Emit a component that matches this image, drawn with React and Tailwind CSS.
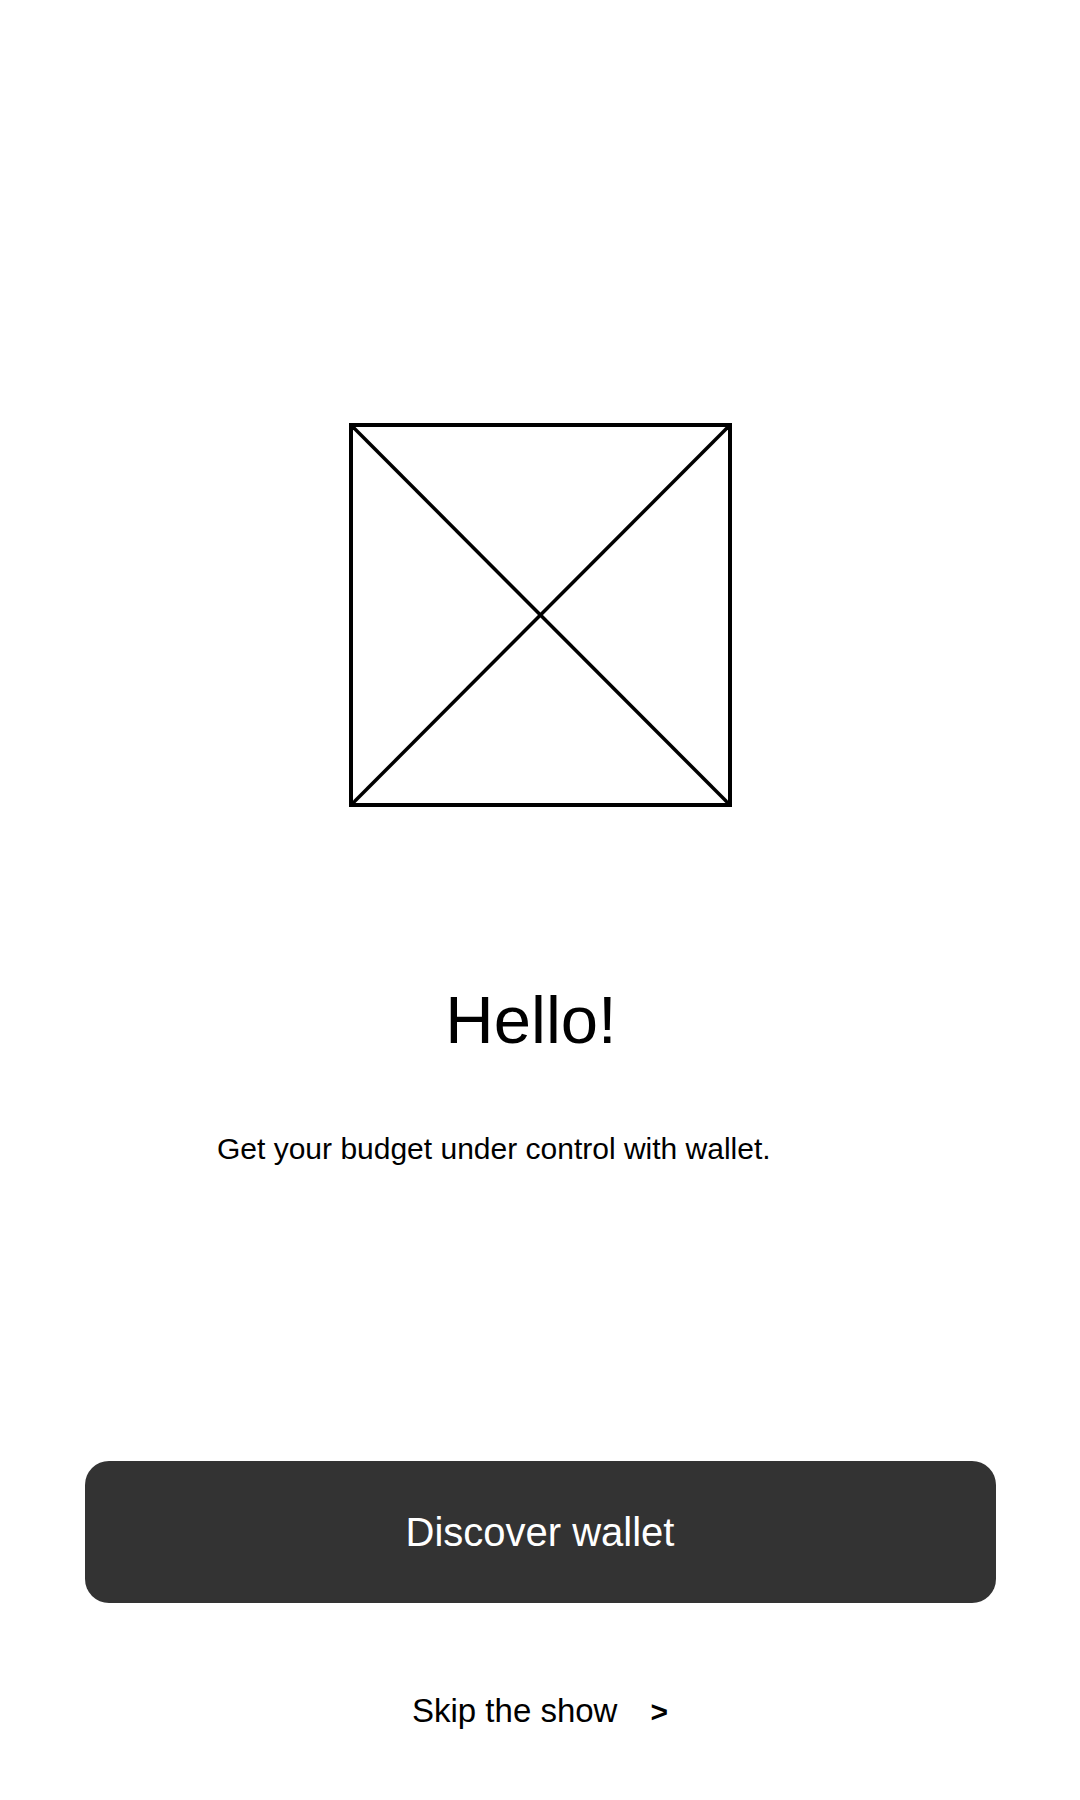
import React from "react";

const font = { fontFamily: '"Liberation Sans", Arial, sans-serif' };

// placeholder image: square with an X through it
const Placeholder = () => (
  <div className="w-[383px] h-[384px] border-[4px] border-black">
    <svg width="100%" height="100%" viewBox="0 0 375 376" preserveAspectRatio="none">
      <line x1="0" y1="0" x2="375" y2="376" stroke="black" strokeWidth="3.5" />
      <line x1="375" y1="0" x2="0" y2="376" stroke="black" strokeWidth="3.5" />
    </svg>
  </div>
);

const App = () => {
  return (
    <div
      className="w-full min-h-[1800px] bg-white text-black flex flex-col items-center pt-[423px]"
      style={font}
    >
      <Placeholder />

      {/* Title */}
      <div className="w-full flex justify-center pr-[18px] mt-[179px]">
        <h1 className="text-[67px] leading-none font-normal">Hello!</h1>
      </div>

      {/* Subtitle */}
      <div className="w-full pl-[217px] mt-[81px]">
        <p className="text-[30px] leading-none">Get your budget under control with wallet.</p>
      </div>

      {/* Primary action */}
      <button className="mt-[297px] w-[911px] h-[142px] rounded-[24px] bg-[#333333] text-white text-[40px] leading-none flex items-center justify-center">
        Discover wallet
      </button>

      {/* Skip */}
      <div className="mt-[91px] flex items-baseline gap-[33px]">
        <span className="text-[33px] leading-none">Skip the show</span>
        <span className="text-[30px] leading-none font-bold">&gt;</span>
      </div>
    </div>
  );
};

export default App;
